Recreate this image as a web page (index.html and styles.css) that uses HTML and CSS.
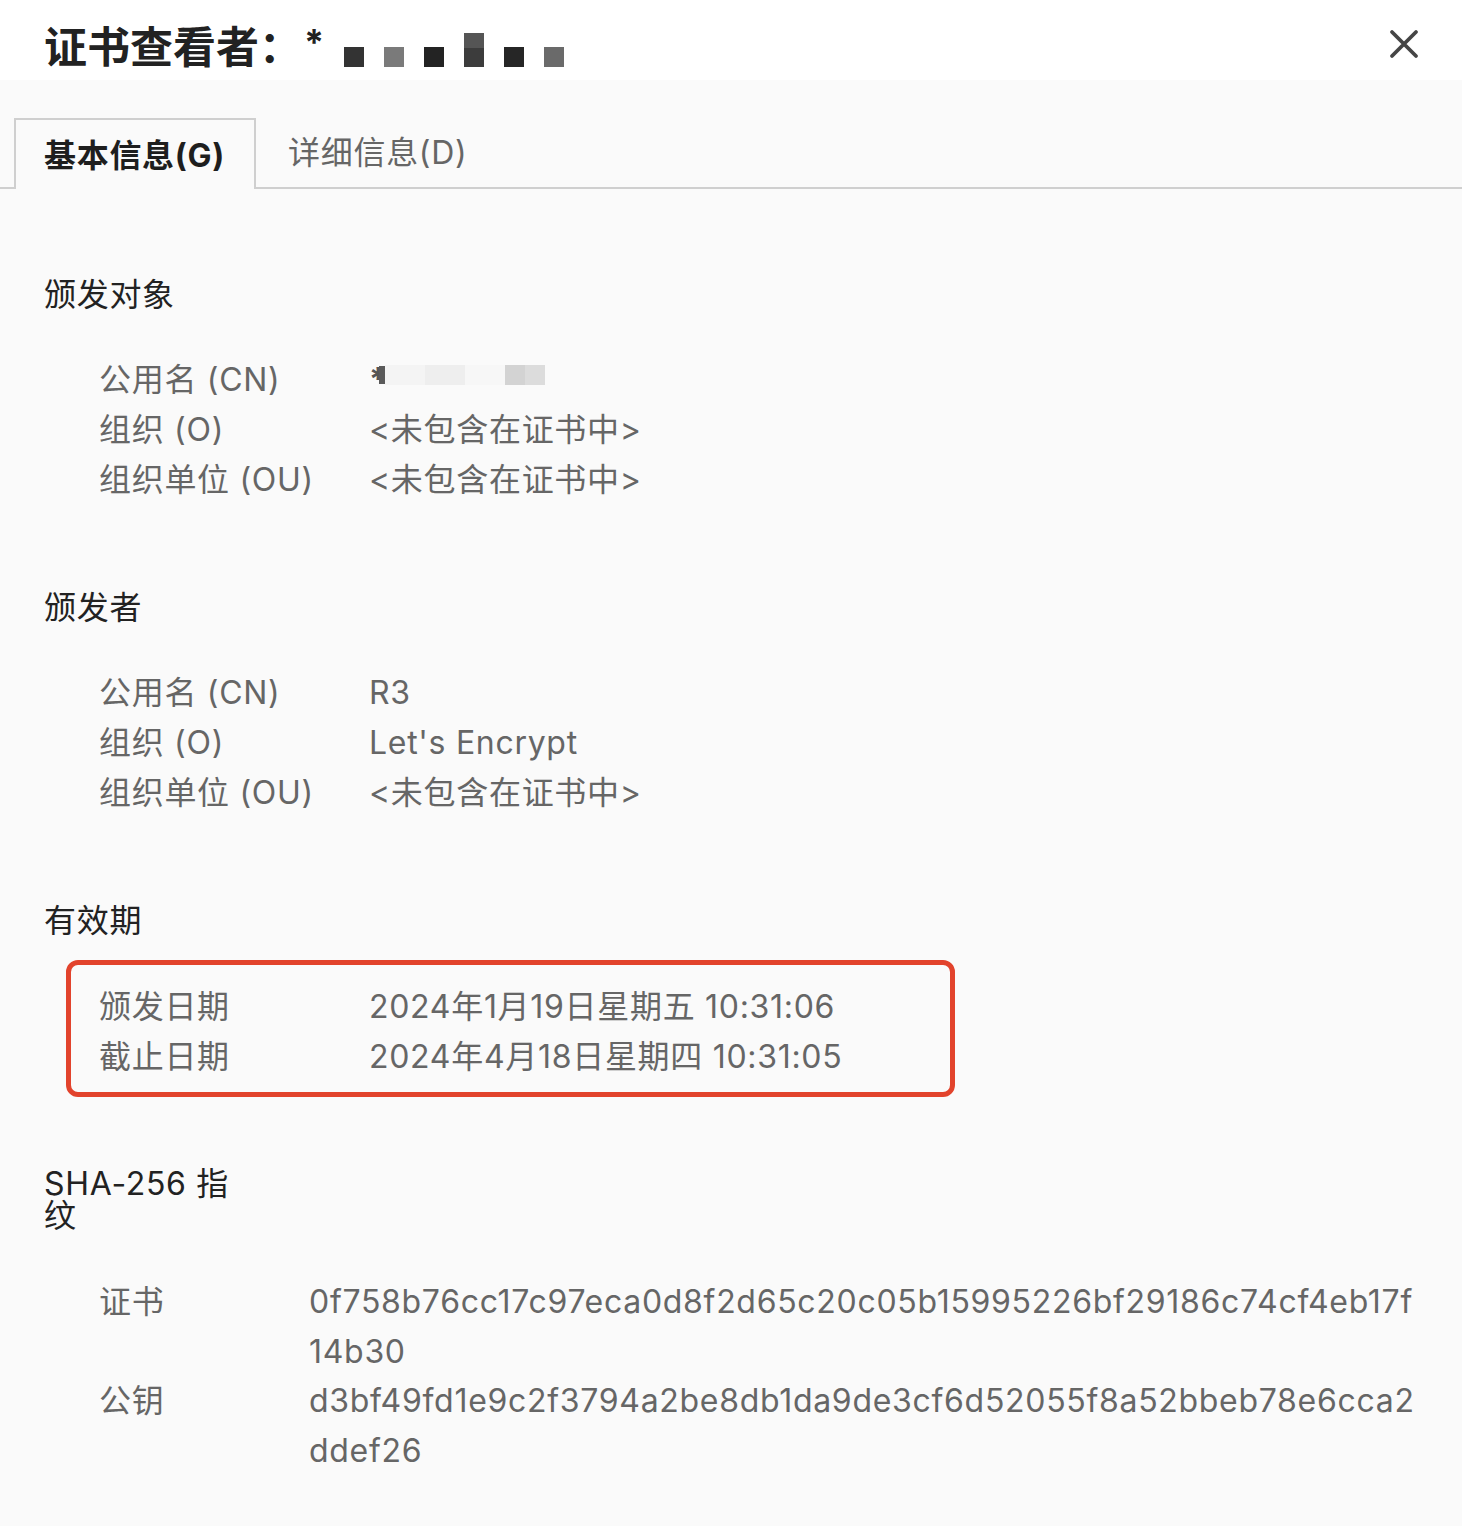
FILE: index.html
```html
<!DOCTYPE html>
<html lang="zh-CN">
<head>
<meta charset="utf-8">
<title>证书查看者</title>
<link rel="stylesheet" href="styles.css">
</head>
<body>
<header class="titlebar">
  <h1 class="title">证书查看者：<span class="star">*</span><span class="redact"><i class="b1"></i><i class="b2"></i><i class="b3"></i><i class="b4"></i><i class="b5"></i><i class="b6"></i></span></h1>
  <button class="close" aria-label="关闭">
    <svg width="32" height="32" viewBox="0 0 32 32"><path d="M4 4 L28 28 M28 4 L4 28" stroke="#454545" stroke-width="3.8" stroke-linecap="round" fill="none"/></svg>
  </button>
</header>
<main class="content">
  <nav class="tabs">
    <div class="tab active">基本信息(G)</div>
    <div class="tab">详细信息(D)</div>
  </nav>

  <section class="section first">
    <h2 class="heading">颁发对象</h2>
    <dl class="rows">
      <dt>公用名 (CN)</dt><dd class="masked"><span class="mstar">*</span><i class="m m1"></i><i class="m m2"></i><i class="m m3"></i><i class="m m4"></i><i class="m m5"></i></dd>
      <dt>组织 (O)</dt><dd>&lt;未包含在证书中&gt;</dd>
      <dt>组织单位 (OU)</dt><dd>&lt;未包含在证书中&gt;</dd>
    </dl>
  </section>

  <section class="section">
    <h2 class="heading">颁发者</h2>
    <dl class="rows">
      <dt>公用名 (CN)</dt><dd>R3</dd>
      <dt>组织 (O)</dt><dd>Let's Encrypt</dd>
      <dt>组织单位 (OU)</dt><dd>&lt;未包含在证书中&gt;</dd>
    </dl>
  </section>

  <section class="section">
    <h2 class="heading">有效期</h2>
    <div class="highlight">
      <dl class="rows in-box">
        <dt>颁发日期</dt><dd>2024年1月19日星期五 10:31:06</dd>
        <dt>截止日期</dt><dd>2024年4月18日星期四 10:31:05</dd>
      </dl>
    </div>
  </section>

  <section class="section sha">
    <h2 class="heading narrow">SHA-256 指纹</h2>
    <dl class="rows hash">
      <dt>证书</dt><dd>0f758b76cc17c97eca0d8f2d65c20c05b15995226bf29186c74cf4eb17f<wbr>14b30</dd>
      <dt>公钥</dt><dd>d3bf49fd1e9c2f3794a2be8db1da9de3cf6d52055f8a52bbeb78e6cca2<wbr>ddef26</dd>
    </dl>
  </section>
</main>
</body>
</html>
```

FILE: styles.css
```css
* { box-sizing: border-box; }

html, body {
  margin: 0;
  padding: 0;
}

body {
  background: #fafafa;
  font-family: "Inter", "Noto Sans CJK SC", sans-serif;
  color: #666;
  letter-spacing: 0.7px;
  width: 1462px;
  min-height: 1526px;
}

.titlebar {
  height: 80px;
  background: #fff;
  display: flex;
  align-items: center;
  justify-content: space-between;
  padding: 0 42px 0 44px;
}

.title {
  margin: 0;
  font-size: 43px;
  font-weight: 700;
  letter-spacing: 0;
  color: #222;
  display: flex;
  align-items: center;
  line-height: 1;
  padding-top: 14px;
}

.star {
  font-size: 36px;
  margin-left: 2px;
  margin-top: -10px;
}

.redact {
  display: inline-flex;
  align-items: flex-end;
  gap: 20px;
  margin-left: 20px;
  height: 34px;
  margin-top: 6px;
}

.redact i {
  display: block;
  width: 20px;
  height: 20px;
}
.redact .b1 { background: #333; }
.redact .b2 { background: #7a7a7a; }
.redact .b3 { background: #232323; }
.redact .b4 { background: linear-gradient(#555 0 45%, #3c3c3c 45%); height: 34px; }
.redact .b5 { background: #262626; }
.redact .b6 { background: #6a6a6a; }

.close {
  border: 0;
  background: none;
  padding: 0;
  width: 32px;
  height: 32px;
  margin-top: 8px;
  cursor: pointer;
}
.close svg { display: block; }

.content {
  padding: 38px 43px 40px 0;
}

.tabs {
  display: flex;
  align-items: flex-end;
  border-bottom: 2px solid #cfcfcf;
  padding-left: 14px;
  margin-right: -43px;
  height: 71px;
}

.tab {
  font-size: 32px;
  line-height: 1;
  height: 69px;
  display: flex;
  align-items: center;
  padding: 0 30px 0 32px;
  color: #666;
}

.tab.active {
  border: 2px solid #cfcfcf;
  border-bottom: 0;
  background: #fafafa;
  margin-bottom: -2px;
  height: 71px;
  padding: 2px 29px 0 28px;
  color: #1e1e1e;
  font-weight: 700;
}

.section {
  padding-left: 44px;
  margin-top: 78px;
}
.section.first { margin-top: 81px; }
.section.sha { margin-top: 71px; }

.heading {
  margin: 0;
  font-size: 32px;
  font-weight: 400;
  line-height: 50px;
  color: #222;
}

.heading.narrow {
  width: 200px;
  line-height: 32px;
}

.rows {
  display: grid;
  grid-template-columns: 270px 1fr;
  margin: 35px 0 0 55px;
  font-size: 32px;
  line-height: 50px;
}

.rows dt, .rows dd {
  margin: 0;
  white-space: nowrap;
}

.highlight {
  margin: 14px 0 0 22px;
  width: 889px;
  border: 5px solid #e2432c;
  border-radius: 12px;
  padding: 17px 10px 10px 28px;
}

.rows.in-box {
  margin: 0;
}

.rows.hash {
  grid-template-columns: 210px 1fr;
  margin-top: 45px;
  line-height: 49.5px;
}
.rows.hash dd {
  white-space: normal;
}

.masked {
  display: flex;
  align-items: center;
}
.mstar {
  color: #555;
  font-weight: 700;
  width: 10px;
}
.m {
  display: block;
  width: 40px;
  height: 20px;
  margin-top: -10px;
}
.m1 { width: 6px; background: #5a5a5a; height: 18px; }
.m2 { background: #f4f4f4; }
.m3 { background: #eeeeee; }
.m4 { background: #f7f7f7; }
.m5 { background: linear-gradient(90deg, #d3d3d3 0 50%, #dcdcdc 50%); }
```
